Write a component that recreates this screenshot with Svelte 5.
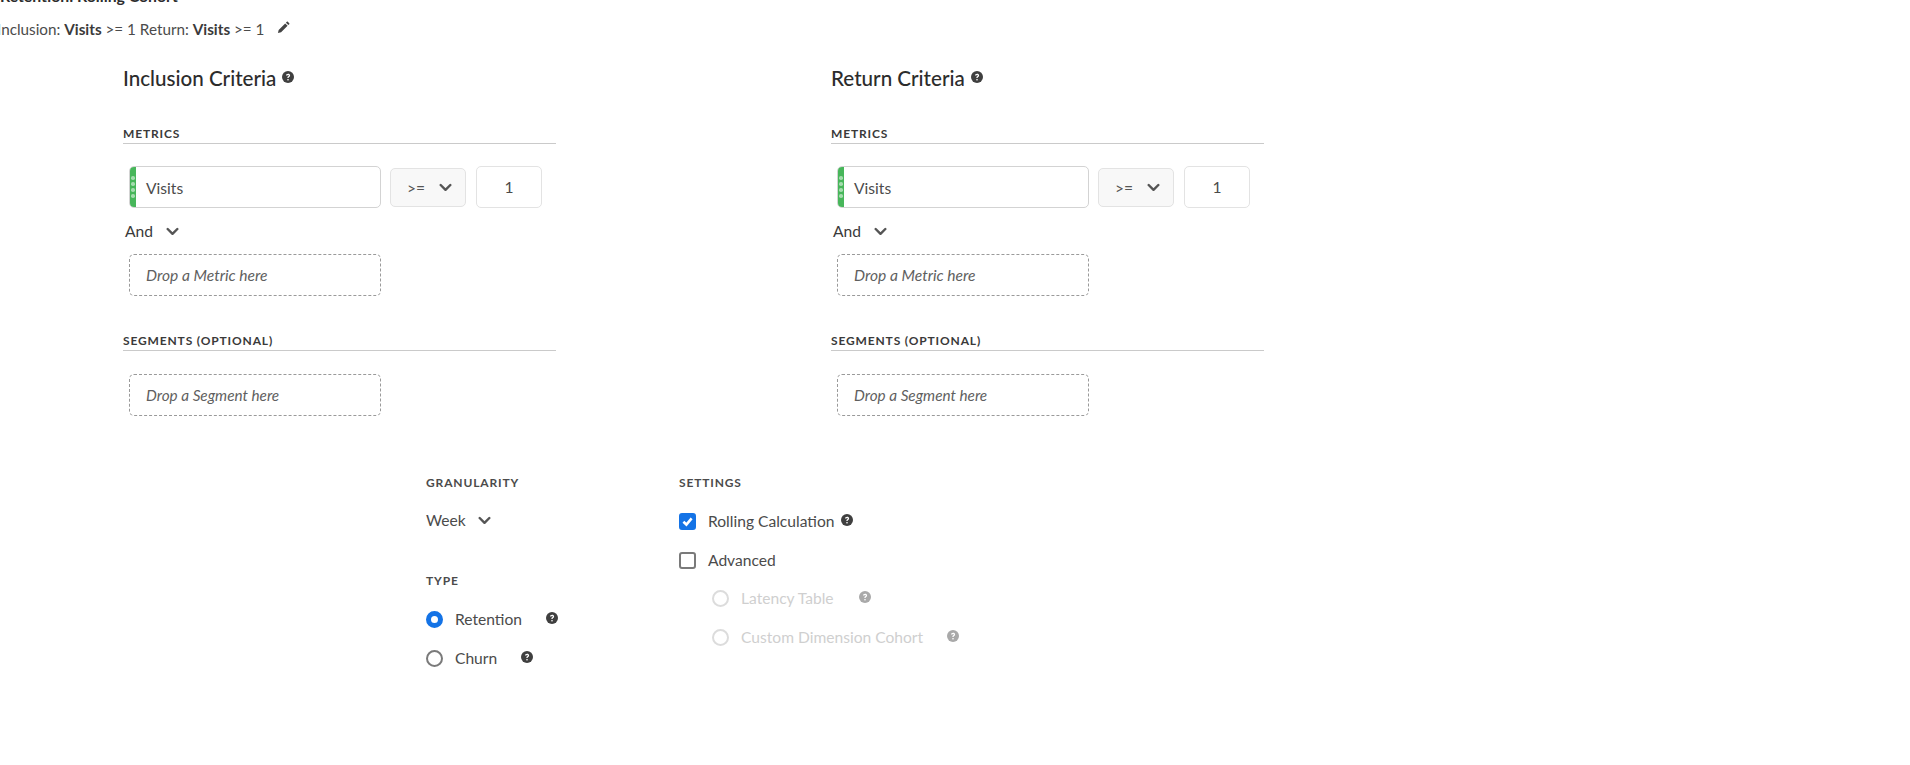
<script>
  const columns = [
    { title: 'Inclusion Criteria' },
    { title: 'Return Criteria' }
  ];
</script>

{#snippet help(cls = '')}
  <svg class="help {cls}" viewBox="0 0 12 12" aria-hidden="true">
    <circle cx="6" cy="6" r="6" fill="currentColor" />
    <path d="M4 4.6c0-1.2.9-1.9 2.1-1.9 1.2 0 2 .7 2 1.7 0 .8-.4 1.2-1 1.6-.4.3-.5.5-.5 1H5.4c0-.9.2-1.3.8-1.7.4-.3.6-.5.6-.8 0-.3-.3-.6-.7-.6-.5 0-.8.3-.8.7H4z" fill="#fff" />
    <rect x="5.35" y="8" width="1.3" height="1.4" fill="#fff" />
  </svg>
{/snippet}

{#snippet chevron()}
  <svg class="chev" viewBox="0 0 14 9" aria-hidden="true">
    <path d="M1.8 1.8 7 7l5.2-5.2" fill="none" stroke="currentColor" stroke-width="2.6" stroke-linecap="round" stroke-linejoin="round" />
  </svg>
{/snippet}

<div class="page">
  <header class="top">
    <div class="title">Retention: Rolling Cohort</div>
    <div class="summary">
      <span>Inclusion: <b>Visits</b> &gt;= 1 Return: <b>Visits</b> &gt;= 1</span>
      <svg class="pencil" viewBox="0 0 14 14" aria-hidden="true">
        <path d="M1 13l.8-3.4 7-7 2.6 2.6-7 7L1 13zM9.6 1.8l1-1c.3-.3.7-.3 1 0l1.6 1.6c.3.3.3.7 0 1l-1 1-2.6-2.6z" fill="currentColor" />
      </svg>
    </div>
  </header>

  <section class="criteria">
    {#each columns as col}
      <div class="col">
        <h2>{col.title} {@render help('h-help')}</h2>

        <h3 class="ruled first">METRICS</h3>
        <div class="metric-row">
          <div class="pill">
            <span class="grip"><i></i><i></i><i></i><i></i></span>
            <span class="pill-text">Visits</span>
          </div>
          <div class="select"><span>&gt;=</span>{@render chevron()}</div>
          <div class="num">1</div>
        </div>
        <div class="and"><span>And</span>{@render chevron()}</div>
        <div class="drop">Drop a Metric here</div>

        <h3 class="ruled second">SEGMENTS (OPTIONAL)</h3>
        <div class="drop seg">Drop a Segment here</div>
      </div>
    {/each}
  </section>

  <section class="options">
    <div class="opt-a">
      <h3>GRANULARITY</h3>
      <div class="week"><span>Week</span>{@render chevron()}</div>
      <h3 class="type">TYPE</h3>
      <div class="line first-radio">
        <span class="radio on"></span><span class="lbl">Retention</span>{@render help('ret')}
      </div>
      <div class="line">
        <span class="radio"></span><span class="lbl">Churn</span>{@render help('chu')}
      </div>
    </div>
    <div class="opt-b">
      <h3>SETTINGS</h3>
      <div class="line first-check">
        <span class="check on">
          <svg viewBox="0 0 12 12" aria-hidden="true"><path d="M2.2 6.2 5 8.8l4.8-5.6" fill="none" stroke="#fff" stroke-width="2.4" /></svg>
        </span>
        <span class="lbl">Rolling Calculation</span>{@render help('roll')}
      </div>
      <div class="line">
        <span class="check"></span><span class="lbl">Advanced</span>
      </div>
      <div class="line sub first-sub">
        <span class="radio off"></span><span class="lbl">Latency Table</span>{@render help('lat')}
      </div>
      <div class="line sub">
        <span class="radio off"></span><span class="lbl">Custom Dimension Cohort</span>{@render help('cus')}
      </div>
    </div>
  </section>
</div>

<style>
  :global(body) {
    margin: 0;
    background: #fff;
    overflow: hidden;
  }
  .page {
    font-family: "Lato", "Open Sans", sans-serif;
    color: #4b4b4b;
    font-size: 15.6px;
    height: 765px;
    overflow: hidden;
  }
  .top {
    margin-top: -14px;
    margin-left: -3px;
  }
  .title {
    font-weight: 700;
    font-size: 15.8px;
    line-height: 20px;
    color: #2c2c2c;
    padding-left: 3px;
  }
  .summary {
    margin-top: 13px;
    display: flex;
    align-items: center;
    line-height: 20px;
    font-size: 15.25px;
    white-space: nowrap;
  }
  .summary b { color: #3a3a3a; }
  .pencil {
    width: 13px;
    height: 13px;
    margin-left: 13px;
    margin-top: -4px;
    color: #444;
  }
  .criteria {
    display: flex;
    gap: 275px;
    padding-left: 123px;
    margin-top: 25px;
  }
  .col { width: 433px; }
  h2 {
    margin: 0;
    font-size: 20.6px;
    font-weight: 500;
    line-height: 28px;
    color: #2c2c2c;
    display: flex;
    align-items: center;
    gap: 7px;
  }
  h3 {
    margin: 0;
    font-size: 12px;
    font-weight: 700;
    letter-spacing: 0.85px;
    line-height: 16px;
    color: #4b4b4b;
  }
  .ruled {
    border-bottom: 1px solid #cacaca;
    padding-bottom: 1px;
    color: #3a3a3a;
  }
  .ruled.first { margin-top: 34px; }
  .ruled.second { margin-top: 37px; }
  .metric-row {
    display: flex;
    align-items: flex-start;
    padding-left: 6px;
    margin-top: 22px;
  }
  .pill {
    width: 252px;
    height: 42px;
    box-sizing: border-box;
    border: 1px solid #d3d3d3;
    border-radius: 5px;
    background: #fff;
    display: flex;
    align-items: center;
    position: relative;
    padding-left: 16px;
    overflow: hidden;
  }
  .pill-text { padding-top: 1px; }
  .grip {
    position: absolute;
    left: 0;
    top: 0;
    bottom: 0;
    width: 6px;
    background: #47b65a;
    display: flex;
    flex-direction: column;
    align-items: center;
    justify-content: center;
    gap: 2.5px;
  }
  .grip i {
    width: 3.5px;
    height: 3.5px;
    border-radius: 50%;
    background: #a4dcae;
  }
  .select {
    width: 76px;
    height: 39px;
    box-sizing: border-box;
    margin: 2px 0 0 9px;
    border: 1px solid #e3e3e3;
    border-radius: 5px;
    background: #f8f8f8;
    display: flex;
    align-items: center;
    justify-content: space-between;
    padding: 0 13px 0 16px;
    color: #555;
  }
  .num {
    width: 66px;
    height: 42px;
    box-sizing: border-box;
    margin-left: 10px;
    border: 1px solid #e3e3e3;
    border-radius: 5px;
    display: flex;
    align-items: center;
    justify-content: center;
  }
  .chev {
    width: 13px;
    height: 9px;
    color: #555;
    flex: none;
  }
  .and {
    display: flex;
    align-items: center;
    gap: 13px;
    margin-top: 13px;
    padding-left: 2px;
    line-height: 20px;
    color: #3a3a3a;
  }
  .drop {
    width: 252px;
    height: 42px;
    box-sizing: border-box;
    margin: 13px 0 0 6px;
    border: 1px dashed #9a9a9a;
    border-radius: 5px;
    display: flex;
    align-items: center;
    padding-left: 16px;
    font-style: italic;
    color: #5f5f5f;
  }
  .seg { margin-top: 23px; font-size: 15.3px; }
  .options {
    display: flex;
    padding-left: 426px;
    margin-top: 59px;
  }
  .opt-a { width: 253px; }
  .opt-b { flex: none; }
  .week {
    display: flex;
    align-items: center;
    gap: 12px;
    margin-top: 19px;
    line-height: 20px;
  }
  .type { margin-top: 43px; }
  .line {
    display: flex;
    align-items: center;
    height: 20px;
    margin-top: 19px;
  }
  .first-radio { margin-top: 20px; }
  .first-check { margin-top: 20px; }
  .first-sub { margin-top: 18px; }
  .lbl { margin-left: 12px; }
  .radio {
    width: 17px;
    height: 17px;
    box-sizing: border-box;
    border-radius: 50%;
    border: 2px solid #7a7a7a;
    background: #fff;
    flex: none;
  }
  .radio.on {
    border: 5.5px solid #1473e6;
  }
  .radio.off {
    border-color: #dcdcdc;
  }
  .check {
    width: 17px;
    height: 17px;
    box-sizing: border-box;
    border-radius: 3px;
    border: 2px solid #7a7a7a;
    background: #fff;
    flex: none;
    display: flex;
    align-items: center;
    justify-content: center;
  }
  .check.on {
    background: #1473e6;
    border-color: #1473e6;
  }
  .check svg { width: 13px; height: 13px; flex: none; }
  .sub { padding-left: 33px; }
  .sub .lbl { color: #cfcfcf; }
  .help {
    width: 12px;
    height: 12px;
    flex: none;
    color: #3f3f3f;
    margin-top: -3px;
  }
  .h-help { margin-top: -2px; margin-left: -1px; }
  .ret { margin-left: 24px; }
  .chu { margin-left: 24px; }
  .roll { margin-left: 7px; }
  .lat { margin-left: 25px; color: #a9a9a9; }
  .cus { margin-left: 24px; color: #a9a9a9; }
</style>
